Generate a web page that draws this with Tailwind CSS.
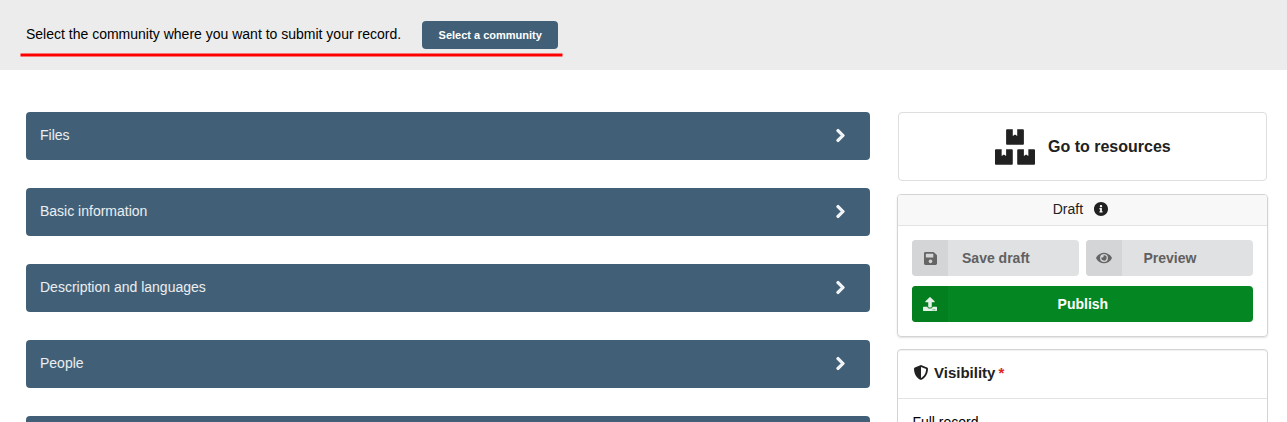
<!DOCTYPE html>
<html lang="en">
<head>
<meta charset="utf-8">
<title>New record</title>
<script src="https://cdn.jsdelivr.net/npm/@tailwindcss/browser@4"></script>
</head>
<body class="h-[422px] overflow-hidden bg-white font-['Liberation_Sans',Arial,sans-serif] text-[14px] leading-5 text-[#212121]">
<svg class="hidden">
  <symbol id="chevron" viewBox="0 0 320 512" overflow="visible"><path stroke="currentColor" stroke-width="36" stroke-linejoin="round" d="M285.476 272.971L91.132 467.314c-9.373 9.373-24.569 9.373-33.941 0l-22.667-22.667c-9.357-9.357-9.375-24.522-.04-33.901L188.505 256 34.484 101.255c-9.335-9.379-9.317-24.544.04-33.901l22.667-22.667c9.373-9.373 24.569-9.373 33.941 0L285.475 239.03c9.373 9.372 9.373 24.568.001 33.941z"/></symbol>
</svg>

<header class="relative flex h-[70px] items-start bg-[#ececec] pl-[26px] text-black">
  <p class="mt-6 w-[396px] whitespace-nowrap">Select the community where you want to submit your record.</p>
  <button class="mt-[21px] h-7 w-[136px] rounded bg-[#416077] pl-[0.5px] text-[11px] font-bold leading-7 text-white">Select a community</button>
  <svg class="absolute left-5 top-[52px] h-[6px] w-[544px]" viewBox="0 0 544 6"><path d="M.5 2.9H542.5" stroke="#f00" stroke-width="3"/></svg>
</header>

<main class="flex h-[352px] gap-[27.4px] overflow-hidden pl-[26px] pt-[42px]">
  <section class="flex w-[844px] shrink-0 flex-col gap-7 text-white/90">
    <div class="flex h-12 shrink-0 items-center justify-between rounded bg-[#416077] pb-[2px] pl-[14px] pr-[25px]"><span>Files</span><svg class="h-[15px] w-[9px] overflow-visible fill-current"><use href="#chevron"/></svg></div>
    <div class="flex h-12 shrink-0 items-center justify-between rounded bg-[#416077] pb-[2px] pl-[14px] pr-[25px]"><span>Basic information</span><svg class="h-[15px] w-[9px] overflow-visible fill-current"><use href="#chevron"/></svg></div>
    <div class="flex h-12 shrink-0 items-center justify-between rounded bg-[#416077] pb-[2px] pl-[14px] pr-[25px]"><span>Description and languages</span><svg class="h-[15px] w-[9px] overflow-visible fill-current"><use href="#chevron"/></svg></div>
    <div class="flex h-12 shrink-0 items-center justify-between rounded bg-[#416077] pb-[2px] pl-[14px] pr-[25px]"><span>People</span><svg class="h-[15px] w-[9px] overflow-visible fill-current"><use href="#chevron"/></svg></div>
    <div class="h-12 shrink-0 rounded bg-[#416077]"></div>
  </section>

  <aside class="flex w-[371px] shrink-0 flex-col">
    <a class="mx-px flex h-[69px] shrink-0 items-center justify-center gap-[13px] rounded border border-[#dededf] text-base font-bold">
      <svg class="h-9 w-10 fill-current" viewBox="0 0 576 512"><path d="M560 288h-80v96l-32-21.3-32 21.3v-96h-80c-8.8 0-16 7.2-16 16v192c0 8.8 7.2 16 16 16h224c8.8 0 16-7.2 16-16V304c0-8.8-7.2-16-16-16zm-384-64h224c8.8 0 16-7.2 16-16V16c0-8.8-7.2-16-16-16h-80v96l-32-21.3L256 96V0h-80c-8.8 0-16 7.2-16 16v192c0 8.8 7.2 16 16 16zm64 64h-80v96l-32-21.3L96 384v-96H16c-8.8 0-16 7.2-16 16v192c0 8.8 7.2 16 16 16h224c8.8 0 16-7.2 16-16V304c0-8.8-7.2-16-16-16z"/></svg>
      <span>Go to resources</span>
    </a>

    <div class="mt-[13px] h-[143px] shrink-0 rounded border border-[#d4d4d5] shadow-[0_1px_2px_rgba(0,0,0,0.12)]">
      <div class="flex h-[31px] items-center justify-center gap-[11px] rounded-t-[3px] border-b border-[#e3e3e4] bg-[#f8f8f8] pb-[2px] pr-[5px]">
        <span>Draft</span>
        <svg class="size-[14px] fill-current" viewBox="8 8 496 496"><path d="M256 8C119.043 8 8 119.083 8 256c0 136.997 111.043 248 248 248s248-111.003 248-248C504 119.083 392.957 8 256 8zm0 110c23.196 0 42 18.804 42 42s-18.804 42-42 42-42-18.804-42-42 18.804-42 42-42zm56 254c0 6.627-5.373 12-12 12h-88c-6.627 0-12-5.373-12-12v-24c0-6.627 5.373-12 12-12h12v-64h-12c-6.627 0-12-5.373-12-12v-24c0-6.627 5.373-12 12-12h64c6.627 0 12 5.373 12 12v100h12c6.627 0 12 5.373 12 12v24z"/></svg>
      </div>
      <div class="grid grid-cols-2 gap-x-[7px] gap-y-[10px] p-[14px] font-bold leading-9">
        <button class="flex h-9 overflow-hidden rounded bg-[#e0e1e2] text-[#606060]">
          <span class="flex h-9 w-9 items-center justify-center bg-[#d4d5d6]"><svg class="h-[15px] w-[13px] fill-current opacity-95" viewBox="0 0 448 512"><path d="M433.941 129.941l-83.882-83.882A48 48 0 0 0 316.118 32H48C21.49 32 0 53.49 0 80v352c0 26.51 21.49 48 48 48h352c26.51 0 48-21.49 48-48V163.882a48 48 0 0 0-14.059-33.941zM224 416c-35.346 0-64-28.654-64-64 0-35.346 28.654-64 64-64s64 28.654 64 64c0 35.346-28.654 64-64 64zm96-304.52V212c0 6.627-5.373 12-12 12H76c-6.627 0-12-5.373-12-12V108c0-6.627 5.373-12 12-12h228.52c3.183 0 6.235 1.264 8.485 3.515l3.48 3.48A11.996 11.996 0 0 1 320 111.48z"/></svg></span>
          <span class="flex-1 pr-9">Save draft</span>
        </button>
        <button class="flex h-9 overflow-hidden rounded bg-[#e0e1e2] text-[#606060]">
          <span class="flex h-9 w-9 items-center justify-center bg-[#d4d5d6]"><svg class="h-[14px] w-4 fill-current opacity-95" viewBox="0 0 576 512"><path d="M572.52 241.4C518.29 135.59 410.93 64 288 64S57.68 135.64 3.48 241.41a32.35 32.35 0 0 0 0 29.19C57.71 376.41 165.07 448 288 448s230.32-71.64 284.52-177.41a32.35 32.35 0 0 0 0-29.19zM288 400a144 144 0 1 1 144-144 143.93 143.93 0 0 1-144 144zm0-240a95.31 95.31 0 0 0-25.31 3.79 47.85 47.85 0 0 1-66.9 66.9A95.78 95.78 0 1 0 288 160z"/></svg></span>
          <span class="flex-1 pr-9">Preview</span>
        </button>
        <button class="col-span-2 flex h-9 overflow-hidden rounded bg-[#048722] text-white">
          <span class="flex h-9 w-9 items-center justify-center bg-[#047f20]"><svg class="size-[14px] fill-current opacity-90" viewBox="0 0 512 512"><path d="M296 384h-80c-13.3 0-24-10.7-24-24V192h-87.7c-17.8 0-26.7-21.5-14.1-34.1L242.3 5.7c7.5-7.5 19.8-7.5 27.3 0l152.2 152.2c12.6 12.6 3.7 34.1-14.1 34.1H320v168c0 13.3-10.7 24-24 24zm216-8v112c0 13.3-10.7 24-24 24H24c-13.3 0-24-10.7-24-24V376c0-13.3 10.7-24 24-24h136v8c0 30.9 25.1 56 56 56h80c30.9 0 56-25.1 56-56v-8h136c13.3 0 24 10.7 24 24zm-124 88c0-11-9-20-20-20s-20 9-20 20 9 20 20 20 20-9 20-20zm64 0c0-11-9-20-20-20s-20 9-20 20 9 20 20 20 20-9 20-20z"/></svg></span>
          <span class="flex-1 pr-9">Publish</span>
        </button>
      </div>
    </div>

    <div class="mt-3 h-[140px] shrink-0 rounded border border-[#d4d4d5] shadow-[inset_0_1px_0_rgba(0,0,0,0.05)]">
      <div class="flex h-[49px] items-center border-b border-[#e3e3e4] pb-[2px] pl-[15.6px] text-[15px] font-bold">
        <svg class="mb-[2px] mr-[6px] h-[15px] w-[14px] fill-current" viewBox="16 0 480 512"><path d="M466.5 83.7l-192-80a48.15 48.15 0 0 0-36.9 0l-192 80C27.7 91.1 16 108.6 16 128c0 198.5 114.5 335.7 221.5 380.3 11.8 4.9 25.1 4.9 36.9 0C360.1 472.6 496 349.3 496 128c0-19.4-11.7-36.9-29.5-44.3zM256.1 446.3l-.1-381 175.9 73.3c-3.3 151.4-82.1 261.1-175.8 307.7z"/></svg>
        <span>Visibility</span><span class="ml-[3px] text-[#e02424]">*</span>
      </div>
      <p class="pl-[14px] pt-[13px] text-black">Full record</p>
    </div>
  </aside>
</main>
</body>
</html>
